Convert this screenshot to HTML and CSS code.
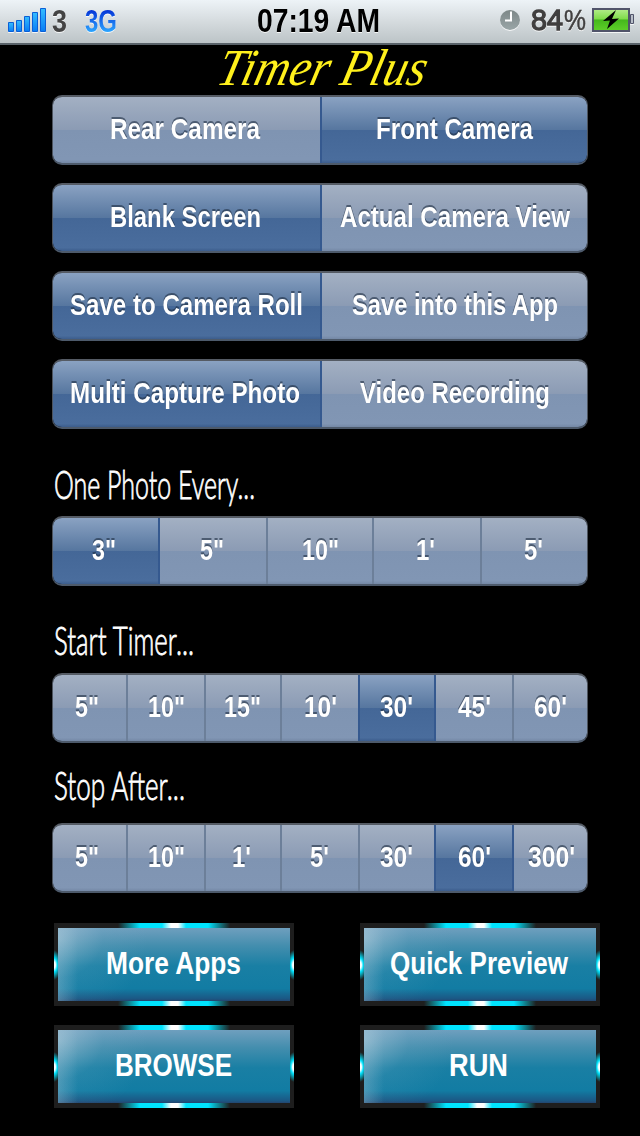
FILE: index.html
```html
<!DOCTYPE html>
<html lang="en">
<head>
<meta charset="utf-8">
<title>Timer Plus</title>
<link rel="stylesheet" href="styles.css">
</head>
<body>
<header class="status">
<svg width="640" height="43" viewBox="0 0 640 43">
<defs>
<linearGradient id="bar" x2="0" y2="1"><stop offset="0" stop-color="#35bdff"/><stop offset="1" stop-color="#087cf4"/></linearGradient>
<linearGradient id="net" x2="0" y2="1"><stop offset=".2" stop-color="#0638d8"/><stop offset=".8" stop-color="#2ca6ff"/></linearGradient>
<linearGradient id="bat" x2="0" y2="1"><stop offset="0" stop-color="#b5ec8c"/><stop offset=".45" stop-color="#7fdc4a"/><stop offset=".5" stop-color="#45b81c"/><stop offset="1" stop-color="#5fd02a"/></linearGradient>
<linearGradient id="clk" x2="0" y2="1"><stop offset="0" stop-color="#7d8888"/><stop offset="1" stop-color="#9aa6a7"/></linearGradient>
</defs>
<g class="lit">
<g fill="url(#bar)" stroke="#0a5fd6" stroke-width="1"><path d="M8.500 22.500h5v9h-5z"/><path d="M16.500 20.500h5v11h-5z"/><path d="M24.500 16.500h5v15h-5z"/><path d="M32.500 12.500h5v19h-5z"/><path d="M40.500 8.500h5v23h-5z"/></g>
<text x="52" y="32" font-size="31" textLength="15" lengthAdjust="spacingAndGlyphs" fill="#444">3</text>
<text x="85" y="32" font-size="31" textLength="32" lengthAdjust="spacingAndGlyphs" fill="url(#net)">3G</text>
<text x="257" y="32" font-size="34" textLength="123" lengthAdjust="spacingAndGlyphs" fill="#000">07:19 AM</text>
<circle cx="510" cy="20" r="10" fill="url(#clk)"/>
<path d="M511 11.500v9H505" fill="none" stroke="#fff" stroke-width="2"/>
<text class="pct" x="531" y="30" font-size="30" textLength="32" lengthAdjust="spacingAndGlyphs" fill="#403f3f" stroke="#403f3f" stroke-width="1.300">84</text>
<text class="pct" x="564" y="30" font-size="29" textLength="22" lengthAdjust="spacingAndGlyphs" fill="#403f3f" stroke="#403f3f" stroke-width=".5">%</text>
<rect x="593" y="9" width="36" height="22" fill="url(#bat)" stroke="#50546a" stroke-width="2"/>
<path d="M630.500 14.500h3v9h-3z" fill="#b9bfc9" stroke="#50546a"/>
<path d="M616 10l-13 11 7-.5-3 8.500 12-10.500-7 .5z" fill="#000"/>
</g>
</svg>
</header>
<main class="screen">
<h1 class="title"><svg width="536" height="50"><text x="163" y="40" textLength="208" lengthAdjust="spacingAndGlyphs">Timer Plus</text></svg></h1>
<section class="modes">
<div class="seg two"><button><svg><text x="57" y="42" textLength="150" lengthAdjust="spacingAndGlyphs">Rear Camera</text></svg></button><button class="on"><svg><text x="54" y="42" textLength="157" lengthAdjust="spacingAndGlyphs">Front Camera</text></svg></button></div>
<div class="seg two"><button class="on"><svg><text x="57" y="42" textLength="151" lengthAdjust="spacingAndGlyphs">Blank Screen</text></svg></button><button class="after"><svg><text x="18" y="42" textLength="230" lengthAdjust="spacingAndGlyphs">Actual Camera View</text></svg></button></div>
<div class="seg two"><button class="on"><svg><text x="17" y="42" textLength="233" lengthAdjust="spacingAndGlyphs">Save to Camera Roll</text></svg></button><button class="after"><svg><text x="30" y="42" textLength="206" lengthAdjust="spacingAndGlyphs">Save into this App</text></svg></button></div>
<div class="seg two"><button class="on"><svg><text x="17" y="42" textLength="230" lengthAdjust="spacingAndGlyphs">Multi Capture Photo</text></svg></button><button class="after"><svg><text x="38" y="42" textLength="190" lengthAdjust="spacingAndGlyphs">Video Recording</text></svg></button></div>
</section>
<h2 class="label every"><svg width="300" height="50"><text x="2" y="38" textLength="201" lengthAdjust="spacingAndGlyphs">One Photo Every...</text></svg></h2>
<div class="seg five"><button class="on"><svg><text x="39" y="42" textLength="24" lengthAdjust="spacingAndGlyphs">3"</text></svg></button><button class="after"><svg><text x="40" y="42" textLength="24" lengthAdjust="spacingAndGlyphs">5"</text></svg></button><button><svg><text x="34" y="42" textLength="37" lengthAdjust="spacingAndGlyphs">10"</text></svg></button><button><svg><text x="42" y="42" textLength="19" lengthAdjust="spacingAndGlyphs">1'</text></svg></button><button><svg><text x="42" y="42" textLength="19" lengthAdjust="spacingAndGlyphs">5'</text></svg></button></div>
<h2 class="label start"><svg width="300" height="50"><text x="2" y="38" textLength="140" lengthAdjust="spacingAndGlyphs">Start Timer...</text></svg></h2>
<div class="seg seven"><button><svg><text x="22" y="42" textLength="24" lengthAdjust="spacingAndGlyphs">5"</text></svg></button><button><svg><text x="20" y="42" textLength="37" lengthAdjust="spacingAndGlyphs">10"</text></svg></button><button><svg><text x="18" y="42" textLength="37" lengthAdjust="spacingAndGlyphs">15"</text></svg></button><button><svg><text x="22" y="42" textLength="33" lengthAdjust="spacingAndGlyphs">10'</text></svg></button><button class="on"><svg><text x="20" y="42" textLength="33" lengthAdjust="spacingAndGlyphs">30'</text></svg></button><button class="after"><svg><text x="22" y="42" textLength="33" lengthAdjust="spacingAndGlyphs">45'</text></svg></button><button><svg><text x="20" y="42" textLength="33" lengthAdjust="spacingAndGlyphs">60'</text></svg></button></div>
<h2 class="label stop"><svg width="300" height="50"><text x="2" y="38" textLength="131" lengthAdjust="spacingAndGlyphs">Stop After...</text></svg></h2>
<div class="seg seven"><button><svg><text x="22" y="42" textLength="24" lengthAdjust="spacingAndGlyphs">5"</text></svg></button><button><svg><text x="20" y="42" textLength="37" lengthAdjust="spacingAndGlyphs">10"</text></svg></button><button><svg><text x="26" y="42" textLength="19" lengthAdjust="spacingAndGlyphs">1'</text></svg></button><button><svg><text x="28" y="42" textLength="19" lengthAdjust="spacingAndGlyphs">5'</text></svg></button><button><svg><text x="20" y="42" textLength="33" lengthAdjust="spacingAndGlyphs">30'</text></svg></button><button class="on"><svg><text x="22" y="42" textLength="33" lengthAdjust="spacingAndGlyphs">60'</text></svg></button><button class="after"><svg><text x="14" y="42" textLength="47" lengthAdjust="spacingAndGlyphs">300'</text></svg></button></div>
<nav class="actions">
<button class="glow"><span><svg><text x="48" y="46" textLength="135" lengthAdjust="spacingAndGlyphs">More Apps</text></svg></span></button>
<button class="glow"><span><svg><text x="26" y="46" textLength="178" lengthAdjust="spacingAndGlyphs">Quick Preview</text></svg></span></button>
<button class="glow"><span><svg><text x="57" y="46" textLength="117" lengthAdjust="spacingAndGlyphs">BROWSE</text></svg></span></button>
<button class="glow"><span><svg><text x="85" y="46" textLength="59" lengthAdjust="spacingAndGlyphs">RUN</text></svg></span></button>
</nav>
</main>
</body>
</html>
```
FILE: styles.css
```css
* { box-sizing: border-box; }
body { margin: 0; width: 640px; height: 1136px; overflow: hidden; background: #000; font-family: "Liberation Sans", Arial, sans-serif; }
svg { display: block; }
h1, h2 { margin: 0; }
button { margin: 0; padding: 0; border: 0; background: none; font: inherit; }
.status { height: 45px; background: linear-gradient(#edf3f7, #d5dbde 50%, #bcc4c7); border-bottom: 2px solid #596269; font-weight: bold; }
.lit { filter: drop-shadow(0 1px 0 rgba(255,255,255,.8)); }
.pct { font-weight: normal; }
.screen { padding: 0 40px 0 52px; }
.title { height: 50px; }
.title svg { overflow: visible; }
.title text { font: italic 52px "Liberation Serif", "Times New Roman", serif; fill: #fff01c; transform-origin: 163px 40px; transform: skewX(-14deg); }
.modes { display: grid; gap: 18px; }

.seg { display: grid; width: 536px; height: 70px; border: 1px solid #4d545e; border-top: 2px solid #555b64; border-bottom: 2px solid #4d5a6b; border-radius: 10px; overflow: hidden; }
.two { grid-template-columns: 269px 265px; }
.five { grid-template-columns: 107px 108px 106px 108px 105px; }
.seven { grid-template-columns: 75px 78px 76px 78px 76px 78px 73px; }
.seg button { height: 66px; border-right: 2px solid #6c7f99; background: linear-gradient(#a3b0c3, #8b9bb4 50%, #7f94b2 50%, #8196b4 95%, #7488a5); }
.seg button:last-child { border-right: 0; }
.seg .on, .seg button:has(+ .on) { border-right-color: #35598f; }
.seg .on { background: linear-gradient(#8aa2c2, #56769f 50%, #446797 50%, #4a6d9d 95%, #3c5d8c); }
.seg .on:last-child { border-right: 0; }
.seg svg { width: 100%; height: 66px; overflow: visible; filter: drop-shadow(0 -2px 0 rgba(30,45,65,.6)); }
.seg text { font-size: 29.5px; font-weight: bold; fill: #fff; }

.label { height: 50px; }
.label text { font: 300 39px Lato, "Open Sans", sans-serif; fill: #fff; stroke: #fff; stroke-width: .8px; }
.every { margin: 32px 0 5px; }
.start { margin: 31px 0 6px; }
.stop { margin: 19px 0 11px; }

.actions { display: grid; grid-template-columns: 240px 240px; gap: 19px 66px; margin: 30px 0 0 2px; }
.glow { width: 240px; height: 83px; padding: 5px 4px;
  background:
    radial-gradient(ellipse 7px 15px at 0 42px, #fff 20%, #00e4ff 45%, transparent) 0 0 / 4px 100% no-repeat,
    radial-gradient(ellipse 7px 15px at 4px 42px, #fff 20%, #00e4ff 45%, transparent) 100% 0 / 4px 100% no-repeat,
    linear-gradient(90deg, #1e1e1e 64px, #00e4ff 86px, #00e4ff 108px, #fff 117px, #fff 124px, #00e4ff 132px, #00e4ff 154px, #1e1e1e 176px); }
.glow span { display: block; height: 73px; background: radial-gradient(ellipse 90px 80px at 0 10px, rgba(190,212,226,.45), rgba(120,175,200,.15) 50%, transparent), linear-gradient(90deg, rgba(150,190,210,.4), transparent 20px), linear-gradient(#6f9fbe, #448eae 24%, #197fa4 52%, #127ca3 83%, #1b5784 97%, #24466f); }
.glow svg { width: 232px; height: 73px; }
.glow text { font-size: 31px; font-weight: bold; fill: #fff; }
```
